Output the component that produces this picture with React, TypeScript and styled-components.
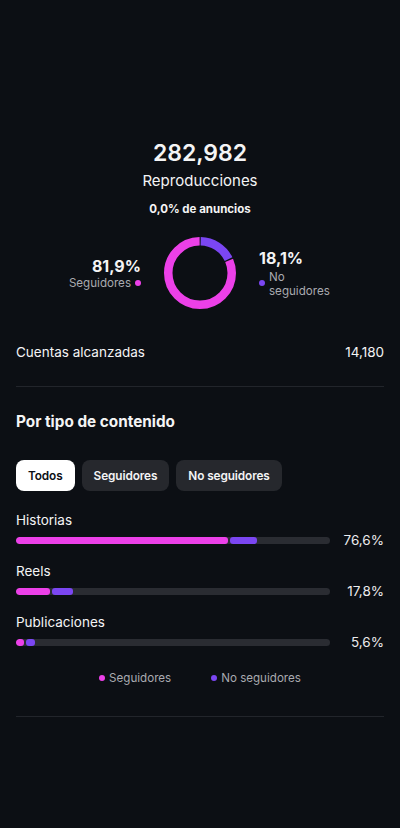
import React from "react";
import styled, { createGlobalStyle } from "styled-components";

const PINK = "#ec40e8";
const PURPLE = "#7b46f2";

const GlobalStyle = createGlobalStyle`
  html, body {
    margin: 0;
    padding: 0;
    background: #0c0f14;
  }
  body {
    font-family: Inter, "Noto Sans", "Liberation Sans", sans-serif;
    color: #f4f4f5;
    -webkit-font-smoothing: antialiased;
  }
`;

const Page = styled.div`
  width: 400px;
  min-height: 828px;
  box-sizing: border-box;
  padding: 137px 16px 0;
  background: #0c0f14;
`;

const Hero = styled.section`
  display: flex;
  flex-direction: column;
  align-items: center;
`;

const BigNumber = styled.div`
  font-size: 23px;
  font-weight: 600;
  line-height: 32px;
`;

const Subtitle = styled.div`
  margin-top: 2px;
  font-size: 15px;
  line-height: 20px;
`;

const AdsNote = styled.div`
  margin-top: 10px;
  font-size: 11.5px;
  font-weight: 700;
  line-height: 16px;
`;

const DonutRow = styled.div`
  margin-top: 20px;
  display: flex;
  align-items: center;
  justify-content: center;
  gap: 23px;
`;

const SideLabel = styled.div<{ $align: "left" | "right" }>`
  width: 110px;
  display: flex;
  flex-direction: column;
  align-items: ${(p) => (p.$align === "right" ? "flex-end" : "flex-start")};
`;

const Percent = styled.div`
  font-size: 16px;
  font-weight: 700;
  line-height: 20px;
`;

const LegendLine = styled.div`
  display: flex;
  align-items: center;
  gap: 4px;
  font-size: 11.6px;
  line-height: 14px;
  color: #a9aab0;
`;

const Dot = styled.span<{ $color: string }>`
  flex: none;
  width: 6px;
  height: 6px;
  border-radius: 50%;
  background: ${(p) => p.$color};
`;

const WrapText = styled.span`
  width: 62px;
  margin-top: 2px;
`;

const MetricRow = styled.div`
  margin-top: 33px;
  display: flex;
  justify-content: space-between;
  align-items: center;
  font-size: 13.5px;
  line-height: 20px;
`;

const Divider = styled.hr<{ $top: number }>`
  margin: ${(p) => p.$top}px 0 0;
  border: none;
  height: 1px;
  background: #22252b;
`;

const SectionTitle = styled.h2`
  margin: 25px 0 0;
  font-size: 15.3px;
  font-weight: 700;
  line-height: 20px;
`;

const Tabs = styled.div`
  margin-top: 28px;
  display: flex;
  gap: 7px;
`;

const Tab = styled.button<{ $active?: boolean }>`
  height: 31px;
  padding: 0 12px;
  border: none;
  border-radius: 8px;
  font-family: inherit;
  font-size: 11.8px;
  font-weight: 600;
  letter-spacing: -0.1px;
  background: ${(p) => (p.$active ? "#ffffff" : "#26282d")};
  color: ${(p) => (p.$active ? "#0c0f14" : "#f4f4f5")};
`;

const BarList = styled.div`
  margin-top: 19px;
  display: flex;
  flex-direction: column;
  gap: 11px;
`;

const BarItem = styled.div`
  display: flex;
  flex-direction: column;
`;

const BarLabel = styled.div`
  font-size: 13.5px;
  line-height: 20px;
`;

const BarLine = styled.div`
  display: flex;
  align-items: center;
  height: 20px;
`;

const Track = styled.div`
  width: 314px;
  height: 7px;
  border-radius: 4px;
  background: #2a2c32;
  display: flex;
  gap: 2px;
  overflow: hidden;
`;

const Segment = styled.div<{ $color: string }>`
  height: 100%;
  border-radius: 3px;
  background: ${(p) => p.$color};
`;

const BarValue = styled.div`
  flex: 1;
  text-align: right;
  font-size: 13.5px;
  color: #ececee;
`;

const Legend = styled.div`
  margin-top: 18px;
  display: flex;
  justify-content: center;
  gap: 40px;
`;

const LegendItem = styled.div`
  display: flex;
  align-items: center;
  gap: 4px;
  font-size: 11.6px;
  line-height: 16px;
  color: #a9aab0;
`;

const Donut: React.FC<{ share: number }> = ({ share }) => {
  const r = 31.75;
  const c = 2 * Math.PI * r;
  const gap = 1.4;
  const purpleLen = share * c - gap;
  const pinkLen = (1 - share) * c - gap;
  return (
    <svg width="72" height="72" viewBox="0 0 72 72">
      <g transform="rotate(-90 36 36)">
        <circle
          cx="36"
          cy="36"
          r={r}
          fill="none"
          stroke={PURPLE}
          strokeWidth="8.5"
          strokeDasharray={`${purpleLen} ${c}`}
          strokeDashoffset={-gap / 2}
        />
        <circle
          cx="36"
          cy="36"
          r={r}
          fill="none"
          stroke={PINK}
          strokeWidth="8.5"
          strokeDasharray={`${pinkLen} ${c}`}
          strokeDashoffset={-(share * c + gap / 2)}
        />
      </g>
    </svg>
  );
};

const rows = [
  { label: "Historias", pink: 212, purple: 27, value: "76,6%" },
  { label: "Reels", pink: 34, purple: 21, value: "17,8%" },
  { label: "Publicaciones", pink: 8, purple: 9, value: "5,6%" },
];

export default function App() {
  return (
    <Page>
      <GlobalStyle />
      <Hero>
        <BigNumber>282,982</BigNumber>
        <Subtitle>Reproducciones</Subtitle>
        <AdsNote>0,0% de anuncios</AdsNote>
        <DonutRow>
          <SideLabel $align="right">
            <Percent>81,9%</Percent>
            <LegendLine>
              Seguidores
              <Dot $color={PINK} />
            </LegendLine>
          </SideLabel>
          <Donut share={0.181} />
          <SideLabel $align="left">
            <Percent>18,1%</Percent>
            <LegendLine>
              <Dot $color={PURPLE} />
              <WrapText>No seguidores</WrapText>
            </LegendLine>
          </SideLabel>
        </DonutRow>
      </Hero>

      <MetricRow>
        <span>Cuentas alcanzadas</span>
        <span>14,180</span>
      </MetricRow>
      <Divider $top={24} />

      <SectionTitle>Por tipo de contenido</SectionTitle>
      <Tabs>
        <Tab $active>Todos</Tab>
        <Tab>Seguidores</Tab>
        <Tab>No seguidores</Tab>
      </Tabs>

      <BarList>
        {rows.map((row) => (
          <BarItem key={row.label}>
            <BarLabel>{row.label}</BarLabel>
            <BarLine>
              <Track>
                <Segment $color={PINK} style={{ width: row.pink }} />
                <Segment $color={PURPLE} style={{ width: row.purple }} />
              </Track>
              <BarValue>{row.value}</BarValue>
            </BarLine>
          </BarItem>
        ))}
      </BarList>

      <Legend>
        <LegendItem>
          <Dot $color={PINK} />
          Seguidores
        </LegendItem>
        <LegendItem>
          <Dot $color={PURPLE} />
          No seguidores
        </LegendItem>
      </Legend>
      <Divider $top={30} />
    </Page>
  );
}
